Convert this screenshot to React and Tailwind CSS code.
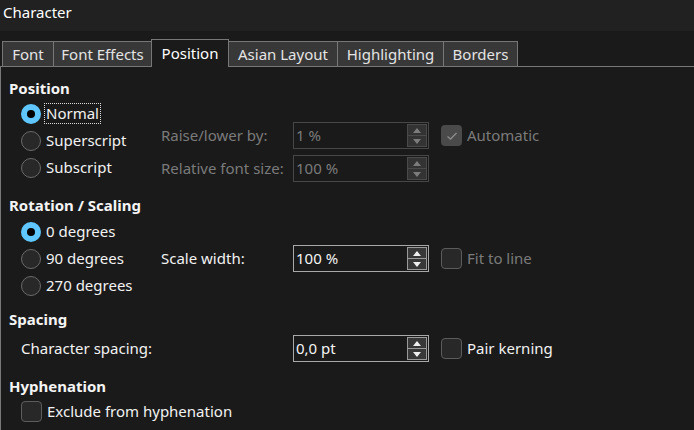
import React from 'react';

const font = { fontFamily: '"Noto Sans", "Open Sans", sans-serif' };

function Radio({ checked, label, focus }) {
  return (
    <div className="flex items-center h-[27px]">
      {checked ? (
        <span className="w-[20px] h-[20px] rounded-full bg-[#5fc6ff] flex items-center justify-center shrink-0">
          <span className="w-[8px] h-[8px] rounded-full bg-black" />
        </span>
      ) : (
        <span className="w-[20px] h-[20px] rounded-full bg-[#282828] border border-[#6a6a6a] shrink-0" />
      )}
      <span
        className={
          'ml-[4px] px-[1px] leading-[19px] text-[#f2f2f2] ' +
          (focus ? 'outline outline-1 outline-dotted outline-[#dcdcdc]' : '')
        }
      >
        {label}
      </span>
    </div>
  );
}

function Check({ checked, disabled, label }) {
  return (
    <div className="flex items-center">
      <span
        className={
          'w-[21px] h-[21px] rounded-[4px] flex items-center justify-center shrink-0 ' +
          (checked ? 'bg-[#4a4a4a]' : 'bg-[#282828] border border-[#5c5c5c]')
        }
      >
        {checked && (
          <svg width="12" height="10" viewBox="0 0 12 10">
            <path d="M1.5 5.5 L4.5 8 L10.5 2" stroke="#8c8c8c" strokeWidth="1.3" fill="none" />
          </svg>
        )}
      </span>
      <span className={'ml-[5px] ' + (disabled ? 'text-[#7a7a7a]' : 'text-[#f2f2f2]')}>{label}</span>
    </div>
  );
}

function Spin({ value, disabled }) {
  const box = disabled ? 'border-[#474747] text-[#7a7a7a]' : 'border-[#a8a8a8] text-[#f4f4f4]';
  const btn = disabled ? 'bg-[#333] border-[#4a4a4a]' : 'bg-[#383838] border-[#9a9a9a]';
  const arrow = disabled ? '#7c7c7c' : '#f0f0f0';
  return (
    <div className={'w-[136px] h-[27px] border flex items-center justify-between pl-[2px] pr-[1px] shrink-0 ' + box}>
      <span>{value}</span>
      <div className="flex flex-col w-[20px] h-[23px]">
        <span className={'flex-1 border flex items-center justify-center ' + btn}>
          <svg width="8" height="5" viewBox="0 0 8 5"><path d="M0 5 L4 0 L8 5 Z" fill={arrow} /></svg>
        </span>
        <span className={'flex-1 border border-t-0 flex items-center justify-center ' + btn}>
          <svg width="8" height="5" viewBox="0 0 8 5"><path d="M0 0 L4 5 L8 0 Z" fill={arrow} /></svg>
        </span>
      </div>
    </div>
  );
}

function Header({ children, className = '' }) {
  return <div className={'h-[22px] leading-[22px] font-bold text-[#f4f4f4] ' + className}>{children}</div>;
}

const tabs = [
  { t: 'Font', cls: 'w-[51px] border-l' },
  { t: 'Font Effects', cls: 'w-[98px] border-l' },
  { t: 'Position', active: true },
  { t: 'Asian Layout', cls: 'w-[108px]' },
  { t: 'Highlighting', cls: 'w-[106px] border-l' },
  { t: 'Borders', cls: 'w-[75px] border-x' },
];

export default function App() {
  return (
    <div className="w-[694px] h-[430px] bg-[#1a1a1a] text-[15px] overflow-hidden" style={font}>
      {/* title */}
      <div className="h-[31px] bg-[#212121] text-white flex items-start px-[3px]">
        <span className="h-[24px] leading-[24px]">Character</span>
      </div>

      {/* tabs */}
      <div className="flex items-end pt-[8px]">
        <div className="w-[2px] border-b border-[#777]" />
        {tabs.map(({ t, cls, active }) =>
          active ? (
            <div key={t} className="w-[78px] h-[28px] border-t border-x border-[#777] text-white flex items-center justify-center">
              {t}
            </div>
          ) : (
            <div
              key={t}
              className={'h-[26px] bg-[#383838] border-t border-b border-[#777] text-[#e4e4e4] flex items-center justify-center ' + cls}
            >
              {t}
            </div>
          )
        )}
        <div className="flex-1 border-b border-[#777]" />
      </div>

      {/* panel */}
      <div className="border-l border-[#777] h-full pl-[8px] pt-[10px]">
        <Header>Position</Header>
        <div className="flex pl-[12px] mt-[1px]">
          <div className="w-[140px]">
            <Radio checked label="Normal" focus />
            <Radio label="Superscript" />
            <Radio label="Subscript" />
          </div>
          <div className="flex flex-col pt-[22px] gap-[6px]">
            <div className="flex items-center h-[27px]">
              <span className="w-[132px] text-[#7a7a7a]">Raise/lower by:</span>
              <Spin value="1 %" disabled />
              <div className="ml-[12px]">
                <Check checked disabled label="Automatic" />
              </div>
            </div>
            <div className="flex items-center h-[27px]">
              <span className="w-[132px] text-[#7a7a7a]">Relative font size:</span>
              <Spin value="100 %" disabled />
            </div>
          </div>
        </div>

        <Header className="mt-[12px]">Rotation / Scaling</Header>
        <div className="flex pl-[12px] mt-[2px]">
          <div className="w-[140px]">
            <Radio checked label="0 degrees" />
            <Radio label="90 degrees" />
            <Radio label="270 degrees" />
          </div>
          <div className="flex items-center h-[27px] mt-[27px]">
            <span className="w-[132px] text-[#f2f2f2]">Scale width:</span>
            <Spin value="100 %" />
            <div className="ml-[12px]">
              <Check disabled label="Fit to line" />
            </div>
          </div>
        </div>

        <Header className="mt-[9px]">Spacing</Header>
        <div className="flex items-center h-[29px] mt-[4px] pl-[12px]">
          <span className="w-[272px] text-[#f2f2f2]">Character spacing:</span>
          <Spin value="0,0 pt" />
          <div className="ml-[12px]">
            <Check label="Pair kerning" />
          </div>
        </div>

        <Header className="mt-[12px]">Hyphenation</Header>
        <div className="flex items-center h-[27px] mt-[1px] pl-[12px]">
          <Check label="Exclude from hyphenation" />
        </div>
      </div>
    </div>
  );
}
